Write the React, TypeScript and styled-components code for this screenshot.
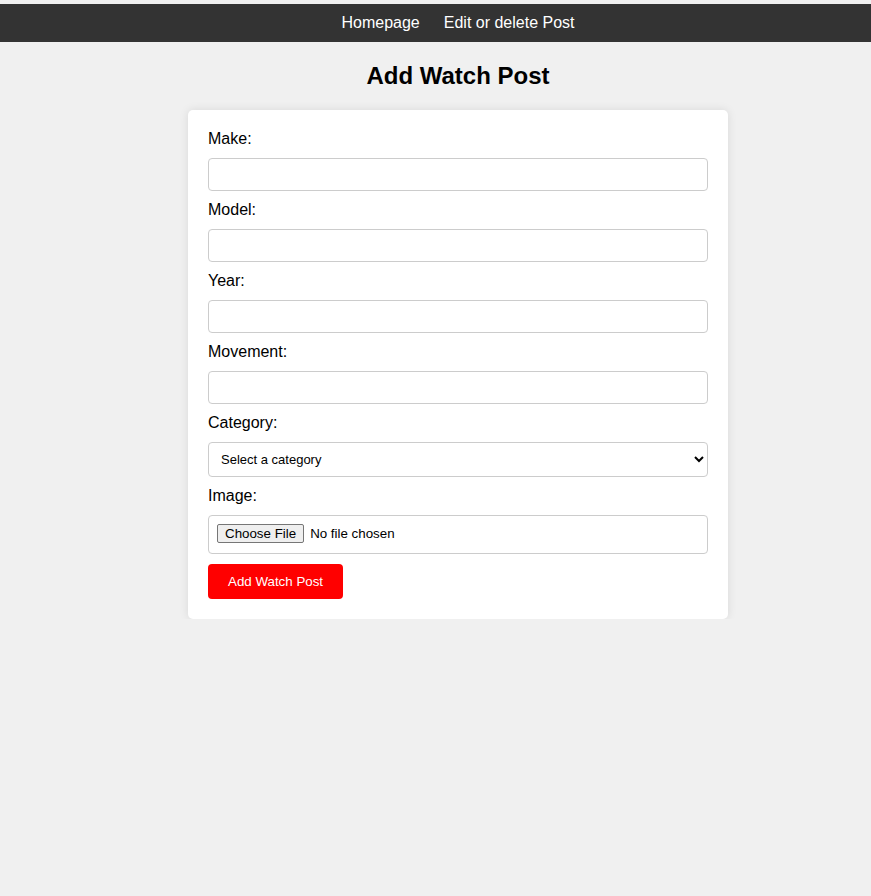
import React from "react";
import styled, { createGlobalStyle } from "styled-components";

const Global = createGlobalStyle`
  html, body { margin: 0; padding: 0; }
  body {
    background: #f0f0f0;
    font-family: Arial, "Liberation Sans", sans-serif;
    color: #000;
  }
`;

const NavBar = styled.nav`
  margin-top: 4px;
  background: #333;
  height: 38px;
  display: flex;
  align-items: center;
  justify-content: center;
  padding-left: 45px;
`;

const NavList = styled.ul`
  list-style: none;
  margin: 0;
  padding: 0;
  display: flex;
  gap: 24px;
`;

const NavLink = styled.a`
  color: #fff;
  text-decoration: none;
  font-size: 16px;
`;

const Main = styled.main`
  padding-left: 45px;
  display: flex;
  flex-direction: column;
  align-items: center;
`;

const Title = styled.h1`
  font-size: 24px;
  font-weight: bold;
  margin: 20px 0 20px;
  line-height: 28px;
`;

const Card = styled.form`
  width: 540px;
  box-sizing: border-box;
  background: #fff;
  border-radius: 5px;
  box-shadow: 0 0 10px rgba(0, 0, 0, 0.1);
  padding: 20px;
  display: flex;
  flex-direction: column;
  align-items: flex-start;
`;

const Label = styled.label`
  display: block;
  font-size: 16px;
  line-height: 18px;
  margin-bottom: 10px;
`;

const field = `
  width: 100%;
  box-sizing: border-box;
  border: 1px solid #ccc;
  border-radius: 4px;
  padding: 8px;
  margin: 0 0 10px;
  font-family: Arial, "Liberation Sans", sans-serif;
  font-size: 13px;
  background: #fff;
  color: #000;
`;

const TextInput = styled.input`
  ${field}
  height: 33px;
`;

const Select = styled.select`
  ${field}
  height: 35px;
  padding: 0 4px 0 8px;
`;

const FileInput = styled.input`
  ${field}
  height: 39px;
  padding: 8px;
  font-size: 13.33px;
  &::file-selector-button {
    font-family: Arial, "Liberation Sans", sans-serif;
    font-size: 13.33px;
    padding: 1px 7px;
    margin-right: 6px;
    border: 1px solid #767676;
    border-radius: 2px;
    background: #efefef;
    color: #000;
  }
`;

const Submit = styled.button`
  background: #ff0000;
  color: #fff;
  border: none;
  border-radius: 4px;
  padding: 10px 20px;
  height: 35px;
  font-family: Arial, "Liberation Sans", sans-serif;
  font-size: 13.33px;
  cursor: pointer;
`;

const fields = ["Make", "Model", "Year", "Movement"];

export default function App() {
  return (
    <>
      <Global />
      <NavBar>
        <NavList>
          <li><NavLink href="#">Homepage</NavLink></li>
          <li><NavLink href="#">Edit or delete Post</NavLink></li>
        </NavList>
      </NavBar>
      <Main>
        <Title>Add Watch Post</Title>
        <Card onSubmit={(e) => e.preventDefault()}>
          {fields.map((f) => (
            <React.Fragment key={f}>
              <Label htmlFor={f}>{f}:</Label>
              <TextInput id={f} type="text" />
            </React.Fragment>
          ))}
          <Label htmlFor="category">Category:</Label>
          <Select id="category" defaultValue="">
            <option value="">Select a category</option>
          </Select>
          <Label htmlFor="image">Image:</Label>
          <FileInput id="image" type="file" />
          <Submit type="submit">Add Watch Post</Submit>
        </Card>
      </Main>
    </>
  );
}
